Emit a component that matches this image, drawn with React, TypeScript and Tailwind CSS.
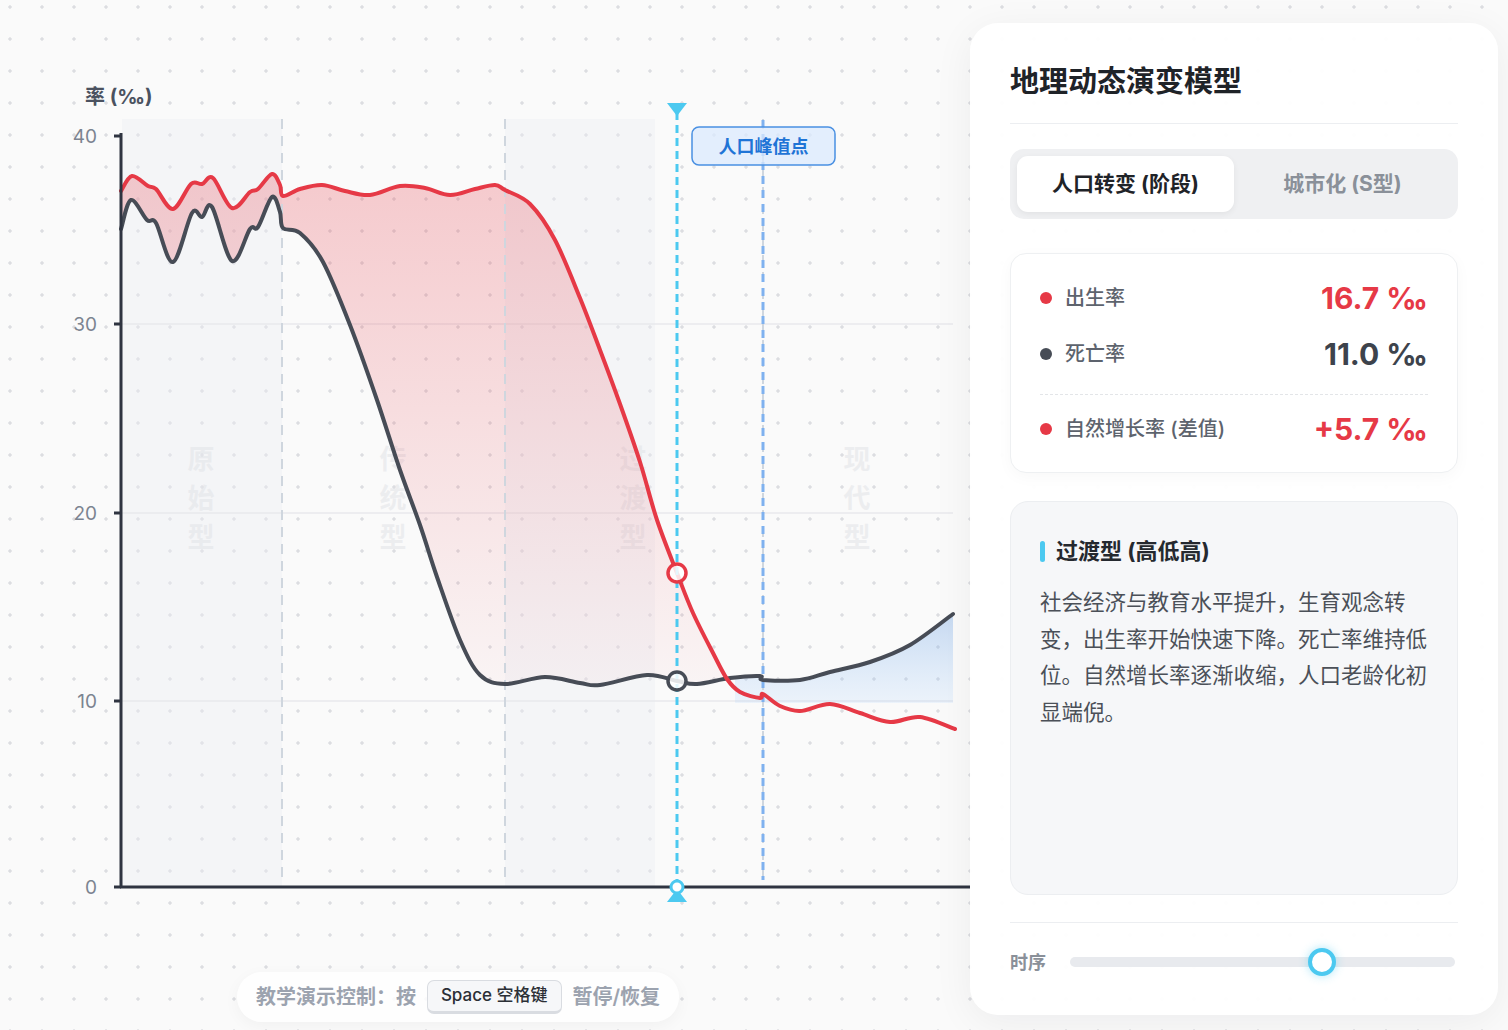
import React from "react";

type Pt = [number, number];

const FONT = 'Inter, "Noto Sans CJK SC", "Noto Sans", sans-serif';

const birth: Pt[] = [
  [121, 191], [132, 176], [148, 186], [156, 189], [173, 209], [191, 184], [202, 184],
  [213, 178], [232, 208], [250, 192], [258, 189], [272, 174], [280, 185], [283, 196],
  [300, 189], [322, 185], [345, 191], [370, 195], [400, 186], [425, 188], [450, 195],
  [475, 189], [495, 185], [505, 190], [530, 204], [555, 240], [580, 298], [600, 350],
  [620, 404], [640, 462], [657, 520], [677, 573], [693, 613], [713, 653], [727, 679],
  [740, 692], [760, 698], [763, 694], [780, 706], [800, 711], [830, 704], [860, 713],
  [890, 722], [920, 717], [955, 729],
];

const death: Pt[] = [
  [121, 229], [131, 200], [147, 220], [156, 223], [173, 262], [192, 213], [202, 217],
  [212, 207], [232, 261], [250, 229], [258, 227], [272, 197], [280, 212], [283, 228],
  [300, 233], [323, 262], [350, 325], [377, 400], [400, 470], [420, 525], [437, 577],
  [460, 640], [480, 675], [505, 684], [545, 677], [580, 683], [600, 685], [647, 675],
  [677, 681], [697, 684], [730, 678], [760, 676], [763, 680], [800, 680], [830, 672],
  [870, 662], [910, 645], [953, 614],
];

// catmull-rom -> cubic bezier
function smoothPath(pts: Pt[]) {
  let d = `M${pts[0][0]},${pts[0][1]}`;
  for (let i = 0; i < pts.length - 1; i++) {
    const p0 = pts[i - 1] || pts[i];
    const p1 = pts[i];
    const p2 = pts[i + 1];
    const p3 = pts[i + 2] || p2;
    const c1x = p1[0] + (p2[0] - p0[0]) / 6;
    const c1y = p1[1] + (p2[1] - p0[1]) / 6;
    const c2x = p2[0] - (p3[0] - p1[0]) / 6;
    const c2y = p2[1] - (p3[1] - p1[1]) / 6;
    d += ` C${c1x.toFixed(1)},${c1y.toFixed(1)} ${c2x.toFixed(1)},${c2y.toFixed(1)} ${p2[0]},${p2[1]}`;
  }
  return d;
}

const ticks = [
  { v: "40", y: 136 },
  { v: "30", y: 324 },
  { v: "20", y: 513 },
  { v: "10", y: 701 },
  { v: "0", y: 887 },
];

const stages = [
  { x: 201, text: ["原", "始", "型"] },
  { x: 393, text: ["传", "统", "型"] },
  { x: 633, text: ["过", "渡", "型"] },
  { x: 857, text: ["现", "代", "型"] },
];

function Chart() {
  const birthD = smoothPath(birth);
  const deathD = smoothPath(death);

  return (
    <svg width={970} height={960} viewBox="0 0 970 960" fontFamily={FONT} className="block shrink-0">
      <defs>
        <linearGradient id="redFill" x1="0" y1="175" x2="0" y2="690" gradientUnits="userSpaceOnUse">
          <stop offset="0" stopColor="#e63946" stopOpacity="0.25" />
          <stop offset="1" stopColor="#e63946" stopOpacity="0.03" />
        </linearGradient>
        <linearGradient id="blueFill" x1="0" y1="610" x2="0" y2="703" gradientUnits="userSpaceOnUse">
          <stop offset="0" stopColor="#6c9fe0" stopOpacity="0.38" />
          <stop offset="1" stopColor="#93c5fd" stopOpacity="0.14" />
        </linearGradient>
        <clipPath id="aboveDeath">
          <path d={`${deathD} L953,0 L121,0 Z`} />
        </clipPath>
        <clipPath id="rightOfCross">
          <rect x="735" y="0" width="220" height="900" />
        </clipPath>
      </defs>

      {/* stage backgrounds */}
      <rect x="122" y="119" width="160" height="768" fill="#eceef2" fillOpacity="0.4" />
      <rect x="505" y="119" width="150" height="768" fill="#eceef2" fillOpacity="0.4" />

      {/* grid */}
      {[324, 513, 701].map((y) => (
        <line key={y} x1="121" x2="953" y1={y} y2={y} stroke="#e8e9ed" strokeWidth="1.5" />
      ))}

      {/* stage names */}
      {stages.map((s) =>
        s.text.map((c, i) => (
          <text
            key={s.x + c}
            x={s.x}
            y={469 + i * 39}
            textAnchor="middle"
            fontSize="27"
            fontWeight="700"
            fill="#dfe1e5"
            fillOpacity="0.5"
          >
            {c}
          </text>
        )),
      )}

      {/* fills */}
      <path d={`${birthD} L955,887 L121,887 Z`} fill="url(#redFill)" clipPath="url(#aboveDeath)" />
      <path d={`${deathD} L953,703 L121,703 Z`} fill="url(#blueFill)" clipPath="url(#rightOfCross)" />

      {/* stage dividers */}
      {[282, 505, 763].map((x) => (
        <line key={x} x1={x} x2={x} y1="119" y2="882" stroke="#cfd6de" strokeWidth="2" strokeDasharray="10 7" />
      ))}
      <line x1="763" x2="763" y1="120" y2="880" stroke="#7fb1ef" strokeWidth="3" strokeDasharray="8 6" />

      {/* curves */}
      <path d={deathD} fill="none" stroke="#474c56" strokeWidth="4" strokeLinecap="round" strokeLinejoin="round" />
      <path d={birthD} fill="none" stroke="#e63946" strokeWidth="4" strokeLinecap="round" strokeLinejoin="round" />

      {/* axes */}
      <text x="85" y="104" fontSize="20" fontWeight="700" fill="#4b5260">
        率 (‰)
      </text>
      {ticks.map((t) => (
        <g key={t.v}>
          <text x="97" y={t.y + 7} textAnchor="end" fontSize="19" fill="#7c8491">
            {t.v}
          </text>
          <line x1="114" x2="121" y1={t.y} y2={t.y} stroke="#2f3441" strokeWidth="3" />
        </g>
      ))}
      <line x1="121" x2="121" y1="133" y2="888" stroke="#2f3441" strokeWidth="3" />
      <line x1="120" x2="970" y1="887" y2="887" stroke="#2f3441" strokeWidth="3" />

      {/* cursor */}
      <line x1="677" x2="677" y1="112" y2="884" stroke="#4cc9f0" strokeWidth="3" strokeDasharray="8 5" />
      <polygon points="667,103 687,103 677,116" fill="#4cc9f0" />
      <polygon points="667,902 687,902 677,889" fill="#4cc9f0" />
      <circle cx="677" cy="887" r="6" fill="#ffffff" stroke="#4cc9f0" strokeWidth="3" />

      <circle cx="677" cy="573" r="9" fill="#ffffff" fillOpacity="0.85" stroke="#e63946" strokeWidth="3.5" />
      <circle cx="677" cy="681" r="9" fill="#ffffff" fillOpacity="0.85" stroke="#474c56" strokeWidth="3.5" />

      {/* peak label */}
      <rect x="692" y="127" width="143" height="38" rx="7" fill="#dbeafe" fillOpacity="0.75" stroke="#4a90e2" strokeWidth="1.5" />
      <text x="763.5" y="153" textAnchor="middle" fontSize="18" fontWeight="700" fill="#1f74d6">
        人口峰值点
      </text>
    </svg>
  );
}

function StatRow({ dot, label, value, valueColor }: { dot: string; label: string; value: string; valueColor: string }) {
  return (
    <div className="flex h-[40px] items-center justify-between">
      <div className="flex items-center gap-[13px]">
        <span className={`h-3 w-3 rounded-full ${dot}`} />
        <span className="text-[20px] font-medium text-[#5d636d]">{label}</span>
      </div>
      <span className={`text-[30px] font-bold ${valueColor}`}>{value}</span>
    </div>
  );
}

function Panel() {
  return (
    <div className="flex h-[992px] w-[528px] flex-col rounded-[28px] bg-white/95 px-10 pt-[39px] shadow-[0_8px_40px_rgba(15,23,42,0.06)]">
      <h1 className="text-[29px] font-bold leading-[40px] text-[#1f2328]">地理动态演变模型</h1>
      <div className="mt-[21px] h-px bg-[#eceef1]" />

      <div className="mt-[25px] grid h-[70px] grid-cols-2 rounded-[14px] bg-[#eff0f2] p-[7px]">
        <div className="flex items-center justify-center rounded-[11px] bg-white text-[21px] font-bold text-[#1f2328] shadow-[0_2px_6px_rgba(0,0,0,0.06)]">
          人口转变 (阶段)
        </div>
        <div className="flex items-center justify-center text-[21px] font-bold text-[#8a9099]">城市化 (S型)</div>
      </div>

      <div className="mt-[34px] h-[220px] rounded-[16px] border border-[#eef0f2] bg-white px-[29px] pt-[24px] shadow-[0_4px_16px_rgba(0,0,0,0.03)]">
        <StatRow dot="bg-[#e63946]" label="出生率" value="16.7 ‰" valueColor="text-[#e63946]" />
        <div className="mt-[16px]">
          <StatRow dot="bg-[#474c56]" label="死亡率" value="11.0 ‰" valueColor="text-[#3d434c]" />
        </div>
        <div className="mt-[20px] border-t border-dashed border-[#e3e5e8]" />
        <div className="mt-[14px]">
          <StatRow dot="bg-[#e63946]" label="自然增长率 (差值)" value="+5.7 ‰" valueColor="text-[#e63946]" />
        </div>
      </div>

      <div className="mt-[28px] h-[394px] rounded-[18px] border border-[#eceef1] bg-[#f6f7f9] px-[29px] pt-[33px]">
        <div className="flex h-[32px] items-center gap-[11px]">
          <span className="h-[21px] w-[5px] rounded-full bg-[#4cc9f0]" />
          <span className="text-[22px] font-bold text-[#25292f]">过渡型 (高低高)</span>
        </div>
        <p className="mt-[17px] text-[21.5px] leading-[1.7] text-[#4b5058]">
          社会经济与教育水平提升，生育观念转变，出生率开始快速下降。死亡率维持低位。自然增长率逐渐收缩，人口老龄化初显端倪。
        </p>
      </div>

      <div className="mt-[27px] h-px bg-[#eceef1]" />
      <div className="mt-[24px] flex h-[30px] items-center">
        <span className="w-[60px] shrink-0 text-[18px] font-bold text-[#8a9099]">时序</span>
        <div className="relative mr-[3px] h-[10px] flex-1 rounded-full bg-[#e8eaee]">
          <div className="absolute left-[65.5%] top-1/2 h-[28px] w-[28px] -translate-x-1/2 -translate-y-1/2 rounded-full border-[4px] border-[#4cc9f0] bg-white shadow-[0_0_10px_rgba(76,201,240,0.45)]" />
        </div>
      </div>
    </div>
  );
}

export default function App() {
  return (
    <div
      className="flex h-[1030px] w-full overflow-hidden bg-[#fafafa] bg-[radial-gradient(circle,#dcdde1_1.4px,transparent_1.9px)] bg-[length:32px_32px] bg-[position:-6px_-9px]"
      style={{ fontFamily: FONT }}
    >
      <div className="flex w-[970px] shrink-0 flex-col">
        <Chart />
        <div className="mt-[12px] flex w-full justify-center pr-[54px]">
          <div className="flex h-[50px] items-center rounded-full bg-white/85 px-[19px] shadow-[0_4px_16px_rgba(0,0,0,0.04)]">
            <span className="text-[20px] font-semibold text-[#9ca3af]">教学演示控制：按</span>
            <span className="ml-[11px] flex h-[34px] items-center rounded-[7px] border border-b-[3px] border-[#d9dce1] bg-[#f6f7f9] px-[13px] text-[17px] font-medium text-[#2b2f36]">
              Space 空格键
            </span>
            <span className="ml-[11px] text-[20px] font-semibold text-[#9ca3af]">暂停/恢复</span>
          </div>
        </div>
      </div>
      <div className="pt-[23px]">
        <Panel />
      </div>
    </div>
  );
}
